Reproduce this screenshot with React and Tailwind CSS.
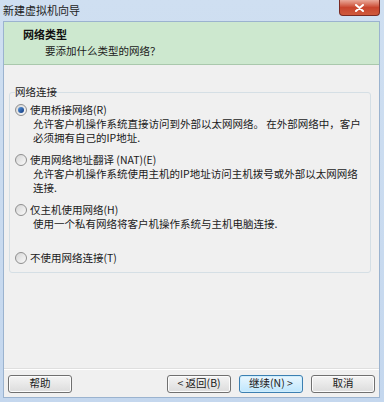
const font = { fontFamily: '"Noto Sans CJK SC", "Noto Sans", sans-serif' };

const Radio = ({ checked }) => (
  <span className="relative w-[12px] h-[12px] rounded-full border border-[#8f8f8f] bg-gradient-to-br from-[#d6d6d6] to-[#fafafa] flex items-center justify-center shrink-0">
    {checked && (
      <span className="w-[6px] h-[6px] rounded-full bg-gradient-to-br from-[#5a9be0] to-[#12367c]"></span>
    )}
  </span>
);

const Option = ({ checked, label, lines, h }) => (
  <div className={h}>
    <div className="flex items-center h-[14px]">
      <Radio checked={checked} />
      <span className="ml-[3px] text-[#1a1a1a]">{label}</span>
    </div>
    <div className="pl-[18px] mt-[0px] leading-[14px] text-[#1a1a1a]">
      {lines.map((l, i) => (
        <div key={i}>{l}</div>
      ))}
    </div>
  </div>
);

const Btn = ({ children, primary }) => (
  <button
    className={
      'w-[64px] h-[18px] rounded-[3px] border flex items-center justify-center text-[10.5px] leading-none text-[#1a1a1a] ' +
      (primary
        ? 'border-[#3c7fb1] bg-gradient-to-b from-[#eaf6fd] to-[#bee6fd] shadow-[inset_0_0_0_1px_#cfeefd]'
        : 'border-[#707070] bg-gradient-to-b from-[#f4f4f4] to-[#dcdcdc] shadow-[inset_0_0_0_1px_#fcfcfc]')
    }
  >
    {children}
  </button>
);

export default function App() {
  return (
    <div
      className="w-[384px] h-[402px] flex flex-col bg-gradient-to-b from-[#cfdff1] to-[#c4d7ee] text-[10.5px]"
      style={font}
    >
      {/* title bar */}
      <div className="h-[21px] flex items-start justify-between shrink-0">
        <span className="ml-[3px] mt-[2px] text-[11px] text-[#222] leading-[16px]">新建虚拟机向导</span>
        <div className="mr-[4px] w-[41px] h-[16px] rounded-b-[4px] border border-t-0 border-[#7a2a22] bg-gradient-to-b from-[#e9a99a] via-[#c8452e] to-[#cf5a3c] flex items-center justify-center">
          <svg width="9" height="8" viewBox="0 0 9 8">
            <path d="M1 1 L8 7 M8 1 L1 7" stroke="#fff" strokeWidth="2" strokeLinecap="round" />
          </svg>
        </div>
      </div>

      {/* client area */}
      <div className="flex-1 ml-[3px] mr-[4px] mb-[4px] bg-[#f0f0f0] flex flex-col border border-[#9bb3cf]">
        {/* header */}
        <div className="h-[43px] shrink-0 bg-[#cde8cf] border-b border-[#a9c8ac] pl-[19px] pt-[5px]">
          <div className="font-bold text-[11px] leading-[14px] text-[#111]">网络类型</div>
          <div className="pl-[22px] mt-[3px] leading-[14px] text-[#1a1a1a]">要添加什么类型的网络？</div>
        </div>

        {/* body */}
        <div className="flex-1 pt-[20px] pl-[5px] pr-[8px]">
          <fieldset className="border border-[#d5dfe5] rounded-[3px] pl-[5px] pr-[4px] pb-[1px]">
            <legend className="px-[0px] leading-[14px] text-[#1a1a1a]">网络连接</legend>
            <div className="pt-[4px]">
              <Option
                checked
                h="h-[50px]"
                label="使用桥接网络(R)"
                lines={['允许客户机操作系统直接访问到外部以太网网络。 在外部网络中，客户', '必须拥有自己的IP地址.']}
              />
              <Option
                h="h-[50px]"
                label="使用网络地址翻译 (NAT)(E)"
                lines={['允许客户机操作系统使用主机的IP地址访问主机拨号或外部以太网网络', '连接.']}
              />
              <Option
                h="h-[48px]"
                label="仅主机使用网络(H)"
                lines={['使用一个私有网络将客户机操作系统与主机电脑连接.']}
              />
              <Option h="h-[20px]" label="不使用网络连接(T)" lines={[]} />
            </div>
          </fieldset>
        </div>

        {/* footer */}
        <div className="h-[29px] shrink-0 border-t border-[#dfdfdf] shadow-[inset_0_1px_0_#ffffff] flex items-center px-[4px] pt-[1px]">
          <Btn>帮助</Btn>
          <div className="flex-1"></div>
          <Btn>&lt; 返回(B)</Btn>
          <div className="w-[8px]"></div>
          <Btn primary>继续(N) &gt;</Btn>
          <div className="w-[8px]"></div>
          <Btn>取消</Btn>
        </div>
      </div>
    </div>
  );
}
